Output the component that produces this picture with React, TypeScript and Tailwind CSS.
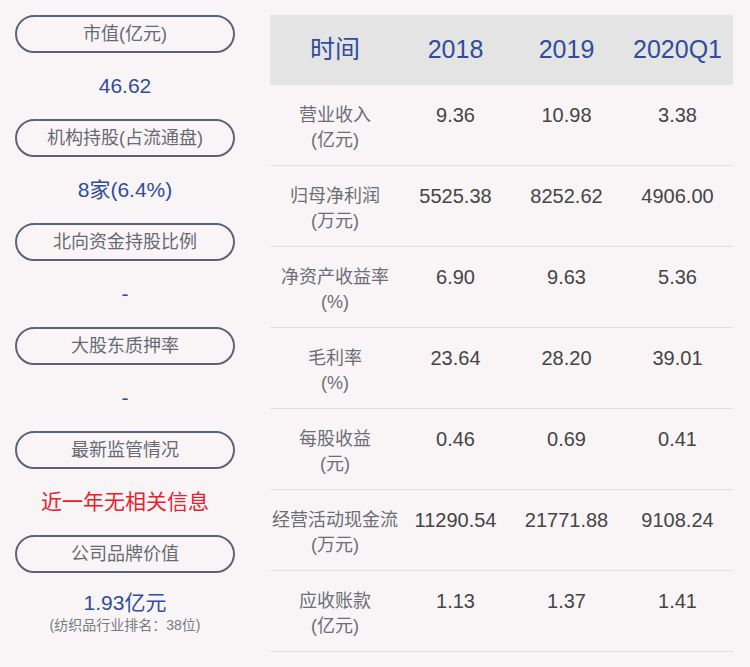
import React from 'react';

const font = { fontFamily: '"Liberation Sans", "Noto Sans CJK SC", sans-serif' };

interface Stat {
  label: string;
  value: string;
  red?: boolean;
  note?: string;
}

const stats: Stat[] = [
  { label: '市值(亿元)', value: '46.62' },
  { label: '机构持股(占流通盘)', value: '8家(6.4%)' },
  { label: '北向资金持股比例', value: '-' },
  { label: '大股东质押率', value: '-' },
  { label: '最新监管情况', value: '近一年无相关信息', red: true },
  { label: '公司品牌价值', value: '1.93亿元', note: '(纺织品行业排名：38位)' },
];

const rows = [
  { name: '营业收入', unit: '(亿元)', v: ['9.36', '10.98', '3.38'] },
  { name: '归母净利润', unit: '(万元)', v: ['5525.38', '8252.62', '4906.00'] },
  { name: '净资产收益率', unit: '(%)', v: ['6.90', '9.63', '5.36'] },
  { name: '毛利率', unit: '(%)', v: ['23.64', '28.20', '39.01'] },
  { name: '每股收益', unit: '(元)', v: ['0.46', '0.69', '0.41'] },
  { name: '经营活动现金流', unit: '(万元)', v: ['11290.54', '21771.88', '9108.24'] },
  { name: '应收账款', unit: '(亿元)', v: ['1.13', '1.37', '1.41'] },
];

export default function App() {
  return (
    <div className="w-[750px] h-[667px] bg-[#f9f5f7] flex overflow-hidden" style={font}>
      {/* 左侧指标 */}
      <div className="w-[220px] ml-[15px] pt-[15px] flex flex-col">
        {stats.map(s => (
          <div key={s.label} className="flex flex-col">
            <div className="h-[38px] rounded-full border-2 border-[#5c6577] flex items-center justify-center text-[18px] text-[#666a72]">
              {s.label}
            </div>
            {s.note ? (
              <div className="h-[66px] flex flex-col items-center pt-[17px]">
                <div className="text-[21px] leading-[26px] text-[#2f4d9a]">{s.value}</div>
                <div className="text-[14px] leading-[18px] text-[#777b82]">{s.note}</div>
              </div>
            ) : (
              <div
                className={`h-[66px] flex items-center justify-center ${
                  s.red ? 'text-[21px] text-[#e6212a]' : 'text-[21px] text-[#2f4d9a]'
                }`}
              >
                {s.value}
              </div>
            )}
          </div>
        ))}
      </div>

      {/* 右侧财务表 */}
      <div className="ml-[35px] mt-[15px] w-[463px] flex flex-col">
        <div className="h-[70px] bg-[#e4e4e4] grid grid-cols-[130px_111px_111px_111px] items-center text-center text-[25px] text-[#2f4d9a]">
          <div>时间</div>
          <div>2018</div>
          <div>2019</div>
          <div>2020Q1</div>
        </div>
        {rows.map(r => (
          <div
            key={r.name}
            className="h-[81px] border-b border-[#e2e0e1] grid grid-cols-[130px_111px_111px_111px] text-center pt-[18px]"
          >
            <div className="text-[18px] leading-[25px] text-[#6b6e75]">
              <div>{r.name}</div>
              <div>{r.unit}</div>
            </div>
            {r.v.map((x, i) => (
              <div key={i} className="text-[20px] leading-[25px] text-[#444]">
                {x}
              </div>
            ))}
          </div>
        ))}
      </div>
    </div>
  );
}
